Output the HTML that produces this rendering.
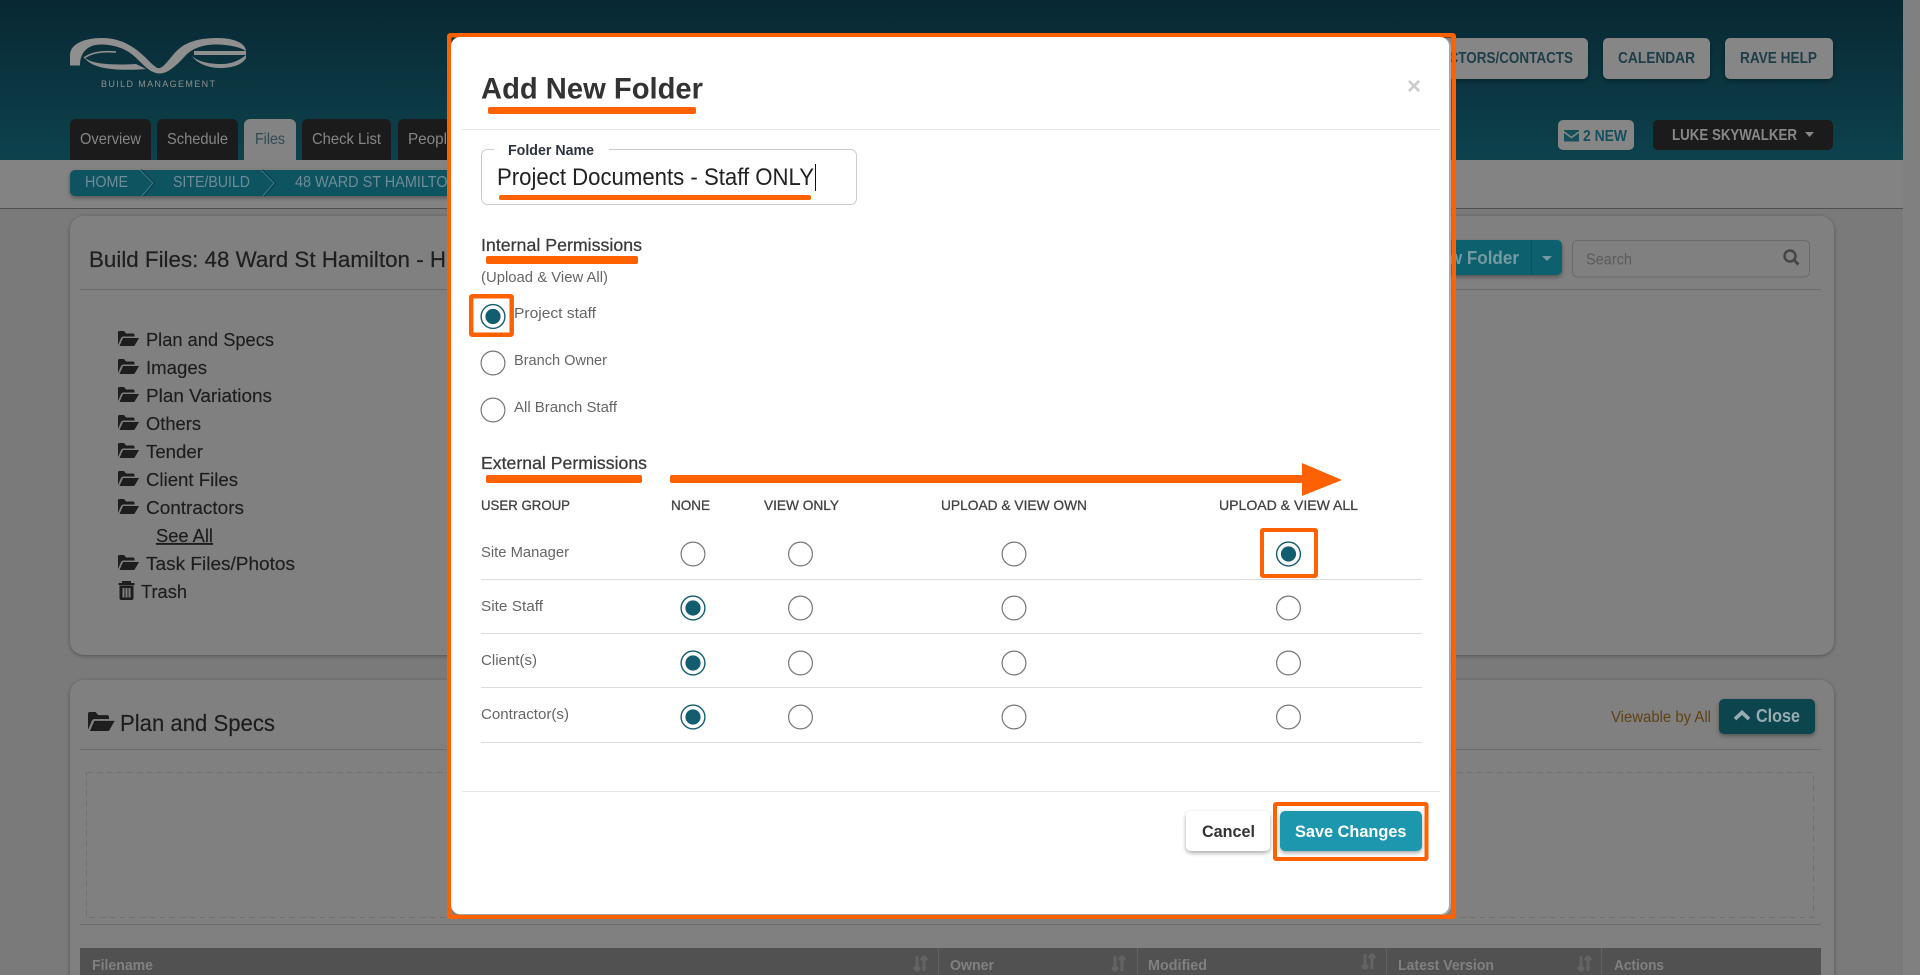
<!DOCTYPE html>
<html lang="en">
<head>
<meta charset="utf-8">
<title>Add New Folder</title>
<style>
html,body{margin:0;padding:0;width:1920px;height:975px;overflow:hidden;background:#7a7a7a}
svg{display:block}
text{font-family:"Liberation Sans",Arial,sans-serif;font-size:15px;fill:#666}
.b{font-weight:bold}
.tab{font-size:16px;fill:#868686}
.crumb{font-size:16px;fill:#6e8c96}
.top{font-size:16px;font-weight:bold;fill:#1e3d48}
.list{font-size:18px;fill:#1d1d1d;stroke:#1d1d1d;stroke-width:.15px}
.th{font-size:15px;font-weight:bold;fill:#808080}
.head{font-size:14px;fill:#444;stroke:#444;stroke-width:.3px}
.sec{font-size:17.5px;fill:#3a3a3a;stroke:#3a3a3a;stroke-width:.25px}
.r{fill:#fff;stroke:#777;stroke-width:1.2}
.s{fill:#fff;stroke:#125e70;stroke-width:1.4}
.d{fill:#125e70}
.o{fill:#ff6000}
.ob{fill:none;stroke:#ff6000}
</style>
</head>
<body>
<svg width="1920" height="975" viewBox="0 0 1920 975" xmlns="http://www.w3.org/2000/svg">
<defs>
<linearGradient id="hdr" x1="0" y1="0" x2="0" y2="1"><stop offset="0" stop-color="#082833"/><stop offset="1" stop-color="#0d424d"/></linearGradient>
<filter id="sh" x="-5%" y="-5%" width="110%" height="110%"><feDropShadow dx="0" dy="1" stdDeviation="2" flood-color="#000" flood-opacity=".35"/></filter>
<filter id="bs" x="-20%" y="-30%" width="140%" height="170%"><feDropShadow dx="0" dy="2" stdDeviation="2" flood-color="#000" flood-opacity=".35"/></filter>
<path id="fo" d="M0,14 L0,1.5 Q0,0 1.5,0 L6,0 L8,2.5 L15,2.5 Q16.5,2.5 16.5,4 L16.5,5.5 L5,5.5 Q3.8,5.5 3,7 Z M1.5,15 L5,7 L21,7 L17,14 Q16.5,15 15.5,15 Z" fill="#1d1d1d"/>
<path id="so" d="M5,1 L5,16 M5,16 L2,12 M5,16 L8,12 M12,16 L12,1 M12,1 L9,5 M12,1 L15,5" fill="none" stroke="#636363" stroke-width="3"/>
</defs>

<!-- page -->
<rect width="1920" height="975" fill="#7a7a7a"/>
<rect x="1903" width="17" height="975" fill="#808080"/>

<!-- header -->
<rect width="1903" height="160" fill="url(#hdr)"/>

<!-- logo -->
<g fill="#8f8f8f">
<path d="M70,65.5 L70,54 C71,44 84,38 102,38 C126,38 140,52 150,62 C155,67 158,69 160,68 C166,66 172,54 180,48 C190,40 204,38 218,38 C235,38 246,44 246,51 C240,47 228,44.5 216,44.5 C202,44.5 192,49 186,55 C177,65 168,73.5 160,73.5 C150,73.5 144,65 134,56 C125,48 113,44.5 101,44.5 C88,44.5 80,52 80,65.5 Z"/>
<path d="M194,53 L246,53" stroke="#8f8f8f" stroke-width="4" fill="none"/>
<path d="M192,56 C200,63 212,64 222,64 C232,64 240,60 246,55 L246,58 C242,65 232,68 220,68 C206,68 196,62 192,56 Z"/>
<path d="M84,57 C92,65 115,65 136,64 L146,69 C120,71 92,70 84,57 Z"/>
<path d="M84,58 C92,52 104,51 116,52" stroke="#8f8f8f" stroke-width="1.6" fill="none"/>
</g>
<text x="101" y="87" style="font-size:9px;fill:#8f8f8f" textLength="114" lengthAdjust="spacing">BUILD MANAGEMENT</text>

<!-- tabs -->
<g fill="#1b1b1b">
<rect x="70" y="119" width="81" height="50" rx="6"/>
<rect x="157" y="119" width="81" height="50" rx="6"/>
<rect x="302" y="119" width="89" height="50" rx="6"/>
<rect x="398" y="119" width="90" height="50" rx="6"/>
</g>
<rect x="244" y="119" width="52" height="50" rx="6" fill="#838383"/>
<text class="tab" x="80" y="144" textLength="61" lengthAdjust="spacingAndGlyphs">Overview</text>
<text class="tab" x="167" y="144" textLength="61" lengthAdjust="spacingAndGlyphs">Schedule</text>
<text class="tab" x="255" y="144" textLength="30" lengthAdjust="spacingAndGlyphs" style="fill:#2f4a55">Files</text>
<text class="tab" x="312" y="144" textLength="69" lengthAdjust="spacingAndGlyphs">Check List</text>
<text class="tab" x="408" y="144" textLength="47.5" lengthAdjust="spacingAndGlyphs">People</text>

<!-- sub header band -->
<rect y="160" width="1903" height="48" fill="#838383"/>
<rect y="208" width="1903" height="1" fill="#4f4f4f"/>

<!-- breadcrumb -->
<rect x="70" y="170" width="400" height="26" rx="5" fill="#105361" filter="url(#bs)"/>
<path d="M141,170 L154,183 L143,196 M262,170 L275,183 L264,196" fill="none" stroke="#0c3e48" stroke-width="2"/>
<path d="M140,170 L153,183 L142,196 M261,170 L274,183 L263,196" fill="none" stroke="#3d7d8a" stroke-width="1"/>
<text class="crumb" x="85" y="187" textLength="43" lengthAdjust="spacingAndGlyphs">HOME</text>
<text class="crumb" x="173" y="187" textLength="77" lengthAdjust="spacingAndGlyphs">SITE/BUILD</text>
<text class="crumb" x="295" y="187" textLength="163" lengthAdjust="spacingAndGlyphs">48 WARD ST HAMILTON</text>

<!-- top right buttons -->
<g fill="#868686" filter="url(#bs)">
<rect x="1380" y="38" width="208" height="41" rx="5"/>
<rect x="1603" y="38" width="107" height="41" rx="5"/>
<rect x="1725" y="38" width="108" height="41" rx="5"/>
</g>
<text class="top" x="1391" y="63" textLength="182" lengthAdjust="spacingAndGlyphs">CONTRACTORS/CONTACTS</text>
<text class="top" x="1618" y="63" textLength="77" lengthAdjust="spacingAndGlyphs">CALENDAR</text>
<text class="top" x="1740" y="63" textLength="77" lengthAdjust="spacingAndGlyphs">RAVE HELP</text>

<rect x="1558" y="120" width="76" height="30" rx="5" fill="#868686"/>
<path d="M1564,130 H1579 V131 L1571.5,136.5 L1564,131 Z M1564,133 L1571.5,138.5 L1579,133 V141.5 H1564 Z" fill="#14505c"/>
<text x="1583" y="141" class="b" style="font-size:16px;fill:#14505c" textLength="44" lengthAdjust="spacingAndGlyphs">2 NEW</text>
<rect x="1653" y="120" width="180" height="30" rx="5" fill="#1b1b1b"/>
<text x="1672" y="140" class="b" style="font-size:16px;fill:#888" textLength="125" lengthAdjust="spacingAndGlyphs">LUKE SKYWALKER</text>
<path d="M1805,132 H1814 L1809.5,137 Z" fill="#888"/>

<!-- panel 1 -->
<rect x="70" y="216" width="1764" height="439" rx="14" fill="#808080" filter="url(#sh)"/>
<text x="89" y="267" style="font-size:22.5px;fill:#1f1f1f;stroke:#1f1f1f;stroke-width:.2px" textLength="357" lengthAdjust="spacingAndGlyphs">Build Files: 48 Ward St Hamilton - H</text>
<rect x="80" y="289" width="1741" height="1" fill="#6c6c6c"/>

<rect x="1380" y="240" width="182" height="35" rx="5" fill="#0e606e" filter="url(#bs)"/>
<rect x="1531" y="240" width="1" height="35" fill="#0c5260"/>
<text x="1427" y="264" class="b" style="font-size:18.5px;fill:#769aa2" textLength="92" lengthAdjust="spacingAndGlyphs">New Folder</text>
<path d="M1542,256 H1552 L1547,261 Z" fill="#769aa2"/>
<rect x="1572.5" y="240.5" width="237" height="36.5" rx="5" fill="none" stroke="#6a6a6a"/>
<text x="1586" y="264.5" style="font-size:15.5px;fill:#5a5a5a" textLength="46" lengthAdjust="spacingAndGlyphs">Search</text>
<circle cx="1790" cy="256" r="5.5" fill="none" stroke="#454545" stroke-width="2.4"/>
<path d="M1794,260 L1798.5,264.5" stroke="#454545" stroke-width="2.8" fill="none"/>

<!-- folder list -->
<use href="#fo" x="118" y="331"/><text class="list" x="146" y="346" textLength="128" lengthAdjust="spacingAndGlyphs">Plan and Specs</text>
<use href="#fo" x="118" y="359"/><text class="list" x="146" y="374" textLength="61" lengthAdjust="spacingAndGlyphs">Images</text>
<use href="#fo" x="118" y="387"/><text class="list" x="146" y="402" textLength="126" lengthAdjust="spacingAndGlyphs">Plan Variations</text>
<use href="#fo" x="118" y="415"/><text class="list" x="146" y="430" textLength="55" lengthAdjust="spacingAndGlyphs">Others</text>
<use href="#fo" x="118" y="443"/><text class="list" x="146" y="458" textLength="57" lengthAdjust="spacingAndGlyphs">Tender</text>
<use href="#fo" x="118" y="471"/><text class="list" x="146" y="486" textLength="92" lengthAdjust="spacingAndGlyphs">Client Files</text>
<use href="#fo" x="118" y="499"/><text class="list" x="146" y="514" textLength="98" lengthAdjust="spacingAndGlyphs">Contractors</text>
<text class="list" x="156" y="542" textLength="57" lengthAdjust="spacingAndGlyphs" text-decoration="underline">See All</text>
<use href="#fo" x="118" y="555"/><text class="list" x="146" y="570" textLength="149" lengthAdjust="spacingAndGlyphs">Task Files/Photos</text>
<path d="M118.5,584 H134.5 M123,584 V582 H130 V584" fill="none" stroke="#1d1d1d" stroke-width="2"/>
<path d="M119.5,585.5 H133.5 V598 Q133.5,600 131.5,600 H121.5 Q119.5,600 119.5,598 Z M122.5,588 V597.5 H124.5 V588 Z M125.5,588 V597.5 H127.5 V588 Z M128.5,588 V597.5 H130.5 V588 Z" fill="#1d1d1d" fill-rule="evenodd"/>
<text class="list" x="141" y="598" textLength="46" lengthAdjust="spacingAndGlyphs">Trash</text>

<!-- panel 2 -->
<rect x="70" y="680" width="1764" height="320" rx="14" fill="#808080" filter="url(#sh)"/>
<use href="#fo" transform="translate(88,712) scale(1.27)"/>
<text x="120" y="731" style="font-size:23px;fill:#1d1d1d;stroke:#1d1d1d;stroke-width:.15px" textLength="155" lengthAdjust="spacingAndGlyphs">Plan and Specs</text>
<text x="1611" y="722" style="font-size:15.5px;fill:#5f4215" textLength="100" lengthAdjust="spacingAndGlyphs">Viewable by All</text>
<rect x="1719" y="699" width="96" height="35" rx="5" fill="#0c4450" filter="url(#bs)"/>
<path d="M1735,719 L1742,712.5 L1749,719" fill="none" stroke="#96acb1" stroke-width="3.6"/>
<text x="1756" y="722" class="b" style="font-size:18px;fill:#96acb1" textLength="44" lengthAdjust="spacingAndGlyphs">Close</text>
<rect x="80" y="749" width="1741" height="1" fill="#6c6c6c"/>
<rect x="86.5" y="772.5" width="1727" height="145" fill="none" stroke="#707070" stroke-dasharray="6 4"/>
<rect x="80" y="924" width="1741" height="1" fill="#6c6c6c"/>

<rect x="80" y="948" width="1741" height="27" fill="#515151"/>
<g fill="#626262"><rect x="938" y="948" width="1" height="27"/><rect x="1137" y="948" width="1" height="27"/><rect x="1386" y="948" width="1" height="27"/><rect x="1601" y="948" width="1" height="27"/></g>
<text class="th" x="92" y="970" textLength="61" lengthAdjust="spacingAndGlyphs">Filename</text>
<text class="th" x="950" y="970" textLength="44" lengthAdjust="spacingAndGlyphs">Owner</text>
<text class="th" x="1148" y="970" textLength="59" lengthAdjust="spacingAndGlyphs">Modified</text>
<text class="th" x="1398" y="970" textLength="96" lengthAdjust="spacingAndGlyphs">Latest Version</text>
<text class="th" x="1614" y="970" textLength="50" lengthAdjust="spacingAndGlyphs">Actions</text>
<use href="#so" x="912" y="955"/><use href="#so" x="1110" y="955"/><use href="#so" x="1360" y="953"/><use href="#so" x="1576" y="955"/>

<!-- modal frame -->
<rect x="449.25" y="35.25" width="1004.5" height="881.5" rx="1" class="ob" stroke-width="4.5"/>
<rect x="452" y="38" width="999" height="877" rx="9" fill="#a8a8a8"/>
<rect x="451" y="37" width="998" height="877" rx="9" fill="#fff"/>

<!-- modal header -->
<text x="481" y="98.5" class="b" style="font-size:30px;fill:#333" textLength="222" lengthAdjust="spacingAndGlyphs">Add New Folder</text>
<rect x="488" y="107" width="208" height="7" rx="2" class="o"/>
<text x="1414" y="94" class="b" text-anchor="middle" style="font-size:24px;fill:#ccc">×</text>
<rect x="462" y="129" width="978" height="1" fill="#e5e5e5"/>

<!-- folder name -->
<rect x="481.5" y="149.5" width="375" height="55" rx="6" fill="#fff" stroke="#ccc"/>
<rect x="494" y="145" width="115" height="8" fill="#fff"/>
<text x="508" y="155" class="b" style="font-size:15px;fill:#2d3440" textLength="86" lengthAdjust="spacingAndGlyphs">Folder Name</text>
<text x="497" y="185" style="font-size:24px;fill:#222" textLength="317" lengthAdjust="spacingAndGlyphs">Project Documents - Staff ONLY</text>
<rect x="815" y="164" width="1" height="27" fill="#111"/>
<rect x="499" y="195" width="312" height="5" rx="2" class="o"/>

<!-- internal -->
<text x="481" y="251" class="sec" textLength="161" lengthAdjust="spacingAndGlyphs">Internal Permissions</text>
<rect x="486" y="256" width="152" height="8" rx="2" class="o"/>
<text x="481" y="282" textLength="127" lengthAdjust="spacingAndGlyphs">(Upload &amp; View All)</text>
<rect x="471.2" y="296.2" width="40.5" height="38.5" rx="1" class="ob" stroke-width="4.5"/>
<circle cx="493" cy="316.5" r="11.9" class="s"/><circle cx="493" cy="316.5" r="7.6" class="d"/>
<text x="514" y="318" textLength="82" lengthAdjust="spacingAndGlyphs">Project staff</text>
<circle cx="493" cy="363" r="11.9" class="r"/>
<text x="514" y="365" textLength="93" lengthAdjust="spacingAndGlyphs">Branch Owner</text>
<circle cx="493" cy="410" r="11.9" class="r"/>
<text x="514" y="412" textLength="103" lengthAdjust="spacingAndGlyphs">All Branch Staff</text>

<!-- external -->
<text x="481" y="469" class="sec" textLength="166" lengthAdjust="spacingAndGlyphs">External Permissions</text>
<rect x="486" y="475" width="156" height="8" rx="2" class="o"/>
<rect x="670" y="475" width="633" height="8" rx="2" class="o"/>
<path d="M1302,463 L1342,480 L1302,496 Z" class="o"/>

<text class="head" x="481" y="510" textLength="89" lengthAdjust="spacingAndGlyphs">USER GROUP</text>
<text class="head" x="671" y="510" textLength="39" lengthAdjust="spacingAndGlyphs">NONE</text>
<text class="head" x="764" y="510" textLength="75" lengthAdjust="spacingAndGlyphs">VIEW ONLY</text>
<text class="head" x="941" y="510" textLength="146" lengthAdjust="spacingAndGlyphs">UPLOAD &amp; VIEW OWN</text>
<text class="head" x="1219" y="510" textLength="139" lengthAdjust="spacingAndGlyphs">UPLOAD &amp; VIEW ALL</text>

<text x="481" y="557" textLength="88" lengthAdjust="spacingAndGlyphs">Site Manager</text>
<text x="481" y="611" textLength="62" lengthAdjust="spacingAndGlyphs">Site Staff</text>
<text x="481" y="665" textLength="56" lengthAdjust="spacingAndGlyphs">Client(s)</text>
<text x="481" y="719" textLength="88" lengthAdjust="spacingAndGlyphs">Contractor(s)</text>

<g fill="#dcdcdc">
<rect x="481" y="579" width="941" height="1"/><rect x="481" y="633" width="941" height="1"/><rect x="481" y="687" width="941" height="1"/><rect x="481" y="742" width="941" height="1"/>
</g>

<!-- row 1 -->
<circle cx="693" cy="554" r="11.9" class="r"/><circle cx="800.5" cy="554" r="11.9" class="r"/><circle cx="1014" cy="554" r="11.9" class="r"/>
<circle cx="1288.5" cy="554" r="11.9" class="s"/><circle cx="1288.5" cy="554" r="7.6" class="d"/>
<rect x="1262" y="530" width="54" height="46" rx="1" class="ob" stroke-width="4"/>
<!-- row 2 -->
<circle cx="693" cy="608" r="11.9" class="s"/><circle cx="693" cy="608" r="7.6" class="d"/>
<circle cx="800.5" cy="608" r="11.9" class="r"/><circle cx="1014" cy="608" r="11.9" class="r"/><circle cx="1288.5" cy="608" r="11.9" class="r"/>
<!-- row 3 -->
<circle cx="693" cy="663" r="11.9" class="s"/><circle cx="693" cy="663" r="7.6" class="d"/>
<circle cx="800.5" cy="663" r="11.9" class="r"/><circle cx="1014" cy="663" r="11.9" class="r"/><circle cx="1288.5" cy="663" r="11.9" class="r"/>
<!-- row 4 -->
<circle cx="693" cy="717" r="11.9" class="s"/><circle cx="693" cy="717" r="7.6" class="d"/>
<circle cx="800.5" cy="717" r="11.9" class="r"/><circle cx="1014" cy="717" r="11.9" class="r"/><circle cx="1288.5" cy="717" r="11.9" class="r"/>

<!-- footer -->
<rect x="462" y="791" width="978" height="1" fill="#e5e5e5"/>
<rect x="1186" y="811" width="84" height="40" rx="5" fill="#fff" filter="url(#bs)"/>
<text x="1202" y="837" class="b" style="font-size:17px;fill:#333" textLength="53" lengthAdjust="spacingAndGlyphs">Cancel</text>
<rect x="1280" y="811" width="142" height="40" rx="5" fill="#1a97ae" filter="url(#bs)"/>
<text x="1295" y="837" class="b" style="font-size:17px;fill:#fff" textLength="111.5" lengthAdjust="spacingAndGlyphs">Save Changes</text>
<rect x="1275" y="804" width="151.5" height="55" rx="1" class="ob" stroke-width="4"/>
</svg>
</body>
</html>
